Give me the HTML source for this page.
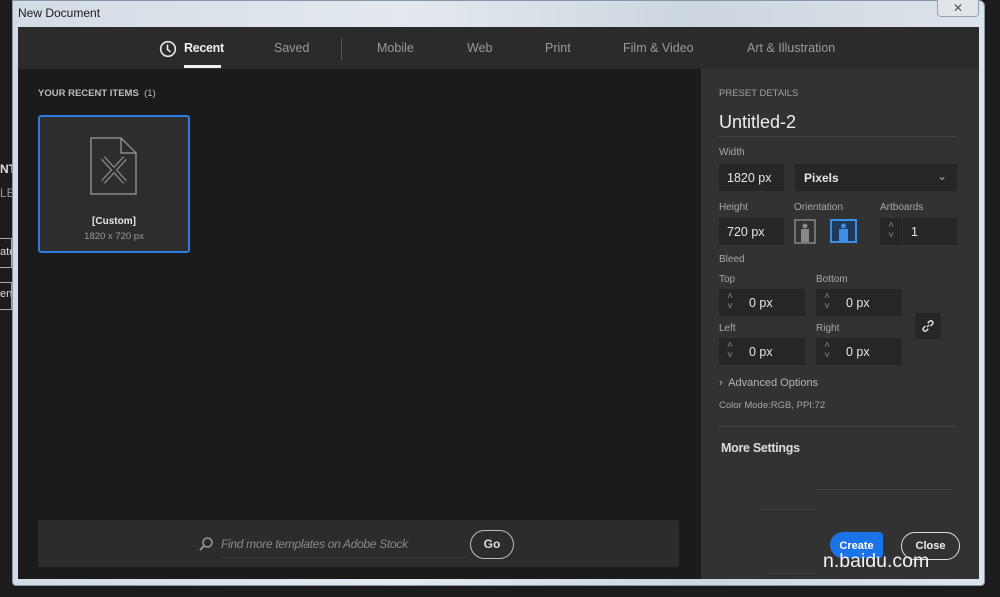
<!DOCTYPE html>
<html><head><meta charset="utf-8"><style>
*{margin:0;padding:0;box-sizing:border-box}
body{width:1000px;height:597px;background:#1c1c1c;position:relative;overflow:hidden;font-family:"Liberation Sans",sans-serif;}
.abs{position:absolute}
.frame{left:12px;top:0;width:973px;height:586px;background:linear-gradient(90deg,#d3dbe4,#e3e9ef 40%,#cdd6df 70%,#dde3ea);border:1px solid #8a96a3;border-radius:0 6px 4px 4px}
.tabbar{left:18px;top:27px;width:961px;height:42px;background:#2b2b2b}
.left{left:18px;top:69px;width:683px;height:510px;background:#1b1b1b}
.right{left:701px;top:69px;width:278px;height:510px;background:#323232}
.tab{top:41px;font-size:12.5px;color:#9a9a9a}
.lbl{font-size:10px;color:#a8a8a8}
.inp{background:#262626;height:27px;color:#e6e6e6;font-size:12.5px;padding:7px 0 0 8px}
.spin{background:#262626;height:27px;width:22px;color:#888;font-size:10px;text-align:center;line-height:10px;padding-top:3px}
</style></head><body>
<div class="abs" style="left:0;top:162px;font-size:12px;color:#ddd;font-weight:bold">NT</div>
<div class="abs" style="left:0;top:186px;font-size:12px;color:#999">LE</div>
<div class="abs" style="left:0;top:238px;width:12px;height:30px;border:1px solid #aaa;border-left:none"></div>
<div class="abs" style="left:0;top:246px;font-size:11px;color:#ddd">ate</div>
<div class="abs" style="left:0;top:288px;font-size:11px;color:#ddd">en.</div>
<div class="abs" style="left:0;top:282px;width:12px;height:28px;border:1px solid #aaa;border-left:none"></div>

<div class="abs frame"></div>
<div class="abs" style="left:18px;top:6px;font-size:12px;color:#1a1a1a">New Document</div>
<div class="abs" style="left:937px;top:0;width:42px;height:17px;border:1px solid #98a3ae;border-top:none;border-radius:0 0 4px 4px;background:#dfe5eb;font-size:12px;color:#555;text-align:center;line-height:16px">✕</div>

<div class="abs tabbar"></div>
<div class="abs left"></div>
<div class="abs right"></div>

<svg class="abs" style="left:159px;top:40px" width="18" height="18" viewBox="0 0 18 18"><circle cx="9" cy="9" r="7.3" fill="none" stroke="#e8e8e8" stroke-width="1.6"/><path d="M8.5 4.5V9.5L11.5 12" fill="none" stroke="#e8e8e8" stroke-width="1.6"/></svg>
<div class="abs tab" style="left:184px;color:#f0f0f0;font-weight:bold;letter-spacing:-0.3px">Recent</div>
<div class="abs" style="left:184px;top:65px;width:37px;height:3px;background:#f0f0f0"></div>
<div class="abs tab" style="left:274px">Saved</div>
<div class="abs" style="left:341px;top:38px;width:1px;height:22px;background:#555"></div>
<div class="abs tab" style="left:377px">Mobile</div>
<div class="abs tab" style="left:467px">Web</div>
<div class="abs tab" style="left:545px">Print</div>
<div class="abs tab" style="left:623px">Film &amp; Video</div>
<div class="abs tab" style="left:747px">Art &amp; Illustration</div>

<div class="abs" style="left:38px;top:88px;font-size:9.5px;color:#bdbdbd;font-weight:bold">YOUR RECENT ITEMS &nbsp;<span style="font-weight:normal">(1)</span></div>
<div class="abs" style="left:38px;top:115px;width:152px;height:138px;border:2px solid #2d7be0;border-radius:3px;background:#2d2d2d"></div>
<svg class="abs" style="left:89px;top:136px" width="50" height="60" viewBox="0 0 50 60"><path d="M2 2H32L47 17V58H2Z M32 2V17H47" fill="none" stroke="#8a8a8a" stroke-width="1.5"/><path d="M14 22L36 46M36 22L14 46" stroke="#8a8a8a" stroke-width="5" fill="none"/><path d="M14 22L36 46M36 22L14 46" stroke="#2d2d2d" stroke-width="2.5" fill="none"/></svg>
<div class="abs" style="left:40px;top:216px;width:148px;text-align:center;font-size:10px;color:#e8e8e8;font-weight:bold">[Custom]</div>
<div class="abs" style="left:40px;top:231px;width:148px;text-align:center;font-size:9.5px;color:#9a9a9a">1820 x 720 px</div>

<div class="abs" style="left:38px;top:520px;width:641px;height:47px;background:#2c2c2c;border-radius:2px"></div>
<svg class="abs" style="left:198px;top:536px" width="16" height="16" viewBox="0 0 16 16"><circle cx="9.5" cy="6.5" r="4.5" fill="none" stroke="#9a9a9a" stroke-width="1.5"/><path d="M6.2 9.8L2 14" stroke="#9a9a9a" stroke-width="1.8"/></svg>
<div class="abs" style="left:221px;top:537px;font-size:12px;color:#8a8a8a;font-style:italic;letter-spacing:-0.3px">Find more templates on Adobe Stock</div>
<div class="abs" style="left:222px;top:557px;width:245px;height:1px;background:#3c3c3c"></div>
<div class="abs" style="left:470px;top:530px;width:44px;height:29px;border:1.5px solid #bbb;border-radius:15px;color:#ddd;font-size:12px;font-weight:bold;text-align:center;line-height:26px">Go</div>

<div class="abs" style="left:719px;top:88px;font-size:9.5px;color:#a0a0a0">PRESET DETAILS</div>
<div class="abs" style="left:719px;top:112px;font-size:18px;color:#eee">Untitled-2</div>
<div class="abs" style="left:719px;top:136px;width:238px;height:1px;background:#444"></div>
<div class="abs lbl" style="left:719px;top:147px">Width</div>
<div class="abs inp" style="left:719px;top:164px;width:65px">1820 px</div>
<div class="abs inp" style="left:795px;top:164px;width:162px;font-weight:bold;font-size:12px;padding-left:9px">Pixels<span style="position:absolute;right:10px;top:5px;color:#aaa;font-weight:normal">⌄</span></div>
<div class="abs lbl" style="left:719px;top:202px">Height</div>
<div class="abs lbl" style="left:794px;top:202px">Orientation</div>
<div class="abs lbl" style="left:880px;top:202px">Artboards</div>
<div class="abs inp" style="left:719px;top:218px;width:65px">720 px</div>
<svg class="abs" style="left:794px;top:219px" width="22" height="25" viewBox="0 0 22 25"><rect x="1" y="1" width="20" height="23" fill="none" stroke="#888" stroke-width="1.5"/><circle cx="11" cy="7" r="2.5" fill="#888"/><rect x="7" y="10" width="8" height="13" fill="#888"/></svg>
<svg class="abs" style="left:830px;top:219px" width="27" height="24" viewBox="0 0 27 24"><rect x="1" y="1" width="25" height="22" fill="#1e3a5c" stroke="#3d8fe6" stroke-width="2"/><circle cx="13.5" cy="7" r="2.5" fill="#3d8fe6"/><rect x="9" y="10" width="9" height="13" fill="#3d8fe6"/></svg>
<div class="abs spin" style="left:880px;top:218px">˄<br>˅</div>
<div class="abs inp" style="left:903px;top:218px;width:54px">1</div>
<div class="abs lbl" style="left:719px;top:254px">Bleed</div>
<div class="abs lbl" style="left:719px;top:274px">Top</div>
<div class="abs lbl" style="left:816px;top:274px">Bottom</div>
<div class="abs spin" style="left:719px;top:289px">˄<br>˅</div><div class="abs inp" style="left:741px;top:289px;width:64px">0 px</div>
<div class="abs spin" style="left:816px;top:289px">˄<br>˅</div><div class="abs inp" style="left:838px;top:289px;width:64px">0 px</div>
<div class="abs lbl" style="left:719px;top:323px">Left</div>
<div class="abs lbl" style="left:816px;top:323px">Right</div>
<div class="abs spin" style="left:719px;top:338px">˄<br>˅</div><div class="abs inp" style="left:741px;top:338px;width:64px">0 px</div>
<div class="abs spin" style="left:816px;top:338px">˄<br>˅</div><div class="abs inp" style="left:838px;top:338px;width:64px">0 px</div>
<div class="abs" style="left:915px;top:313px;width:26px;height:26px;background:#262626;border-radius:2px"></div>
<svg class="abs" style="left:920px;top:318px" width="16" height="16" viewBox="0 0 16 16"><path d="M7 9L9 7M5.5 8L3.5 10a2 2 0 0 0 2.8 2.8L8.3 10.8M10.5 8L12.5 6a2 2 0 0 0-2.8-2.8L7.7 5.2" fill="none" stroke="#ddd" stroke-width="1.5"/></svg>
<div class="abs" style="left:719px;top:377px;font-size:11px;color:#b5b5b5">›&nbsp; Advanced Options</div>
<div class="abs" style="left:719px;top:400px;font-size:9.5px;color:#a5a5a5">Color Mode:RGB, PPI:72</div>
<div class="abs" style="left:719px;top:426px;width:238px;height:1px;background:#444"></div>
<div class="abs" style="left:721px;top:441px;font-size:12.5px;color:#ddd;font-weight:bold;letter-spacing:-0.3px">More Settings</div>
<div class="abs" style="left:816px;top:489px;width:136px;height:1px;background:#3d3d3d"></div>
<div class="abs" style="left:760px;top:509px;width:56px;height:1px;background:#3d3d3d"></div>
<div class="abs" style="left:768px;top:573px;width:48px;height:1px;background:#3d3d3d"></div>
<div class="abs" style="left:830px;top:532px;width:53px;height:26px;background:#1b73e8;border-radius:13px 4px 4px 13px;color:#fff;font-size:11px;font-weight:bold;text-align:center;line-height:28px">Create</div>
<div class="abs" style="left:901px;top:532px;width:59px;height:28px;border:1.5px solid #ddd;border-radius:14px;color:#eee;font-size:11px;font-weight:bold;text-align:center;line-height:26px">Close</div>
<div class="abs" style="left:823px;top:550px;font-size:19.5px;color:#f4f4f4">n.baidu.com</div>
</body></html>
